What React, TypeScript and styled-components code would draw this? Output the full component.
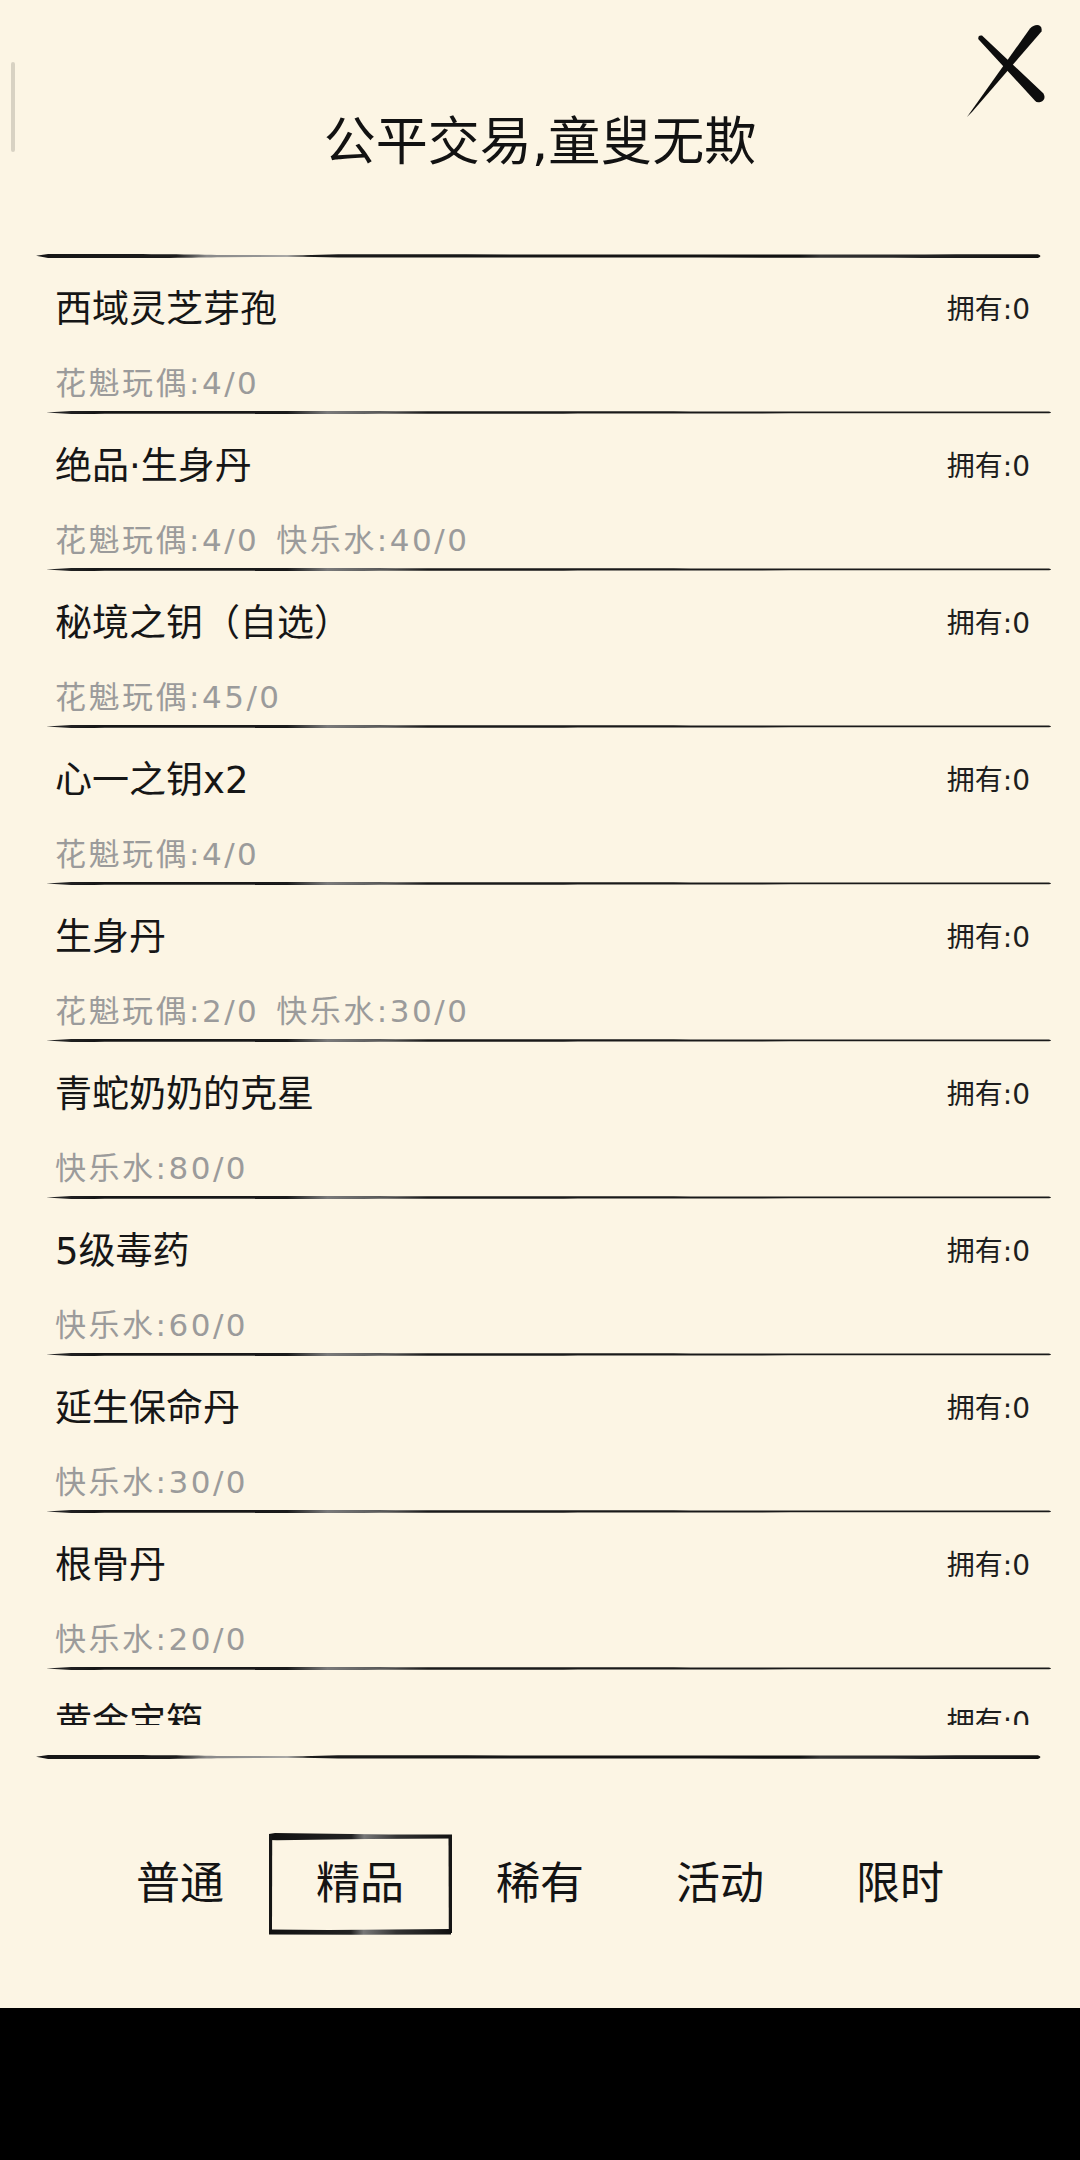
import { useId } from 'react';
import styled, { createGlobalStyle } from 'styled-components';

type Item = {
  name: string;
  costs: string[];
};

const items: Item[] = [
  { name: '西域灵芝芽孢', costs: ['花魁玩偶:4/0'] },
  { name: '绝品·生身丹', costs: ['花魁玩偶:4/0', '快乐水:40/0'] },
  { name: '秘境之钥（自选）', costs: ['花魁玩偶:45/0'] },
  { name: '心一之钥x2', costs: ['花魁玩偶:4/0'] },
  { name: '生身丹', costs: ['花魁玩偶:2/0', '快乐水:30/0'] },
  { name: '青蛇奶奶的克星', costs: ['快乐水:80/0'] },
  { name: '5级毒药', costs: ['快乐水:60/0'] },
  { name: '延生保命丹', costs: ['快乐水:30/0'] },
  { name: '根骨丹', costs: ['快乐水:20/0'] },
  { name: '黄金宝箱', costs: ['快乐水:100/0'] },
];

const tabs = ['普通', '精品', '稀有', '活动', '限时'];
const activeTab = '精品';

const GlobalStyle = createGlobalStyle`
  html, body {
    margin: 0;
    padding: 0;
    background: #000;
  }
  body {
    font-family: "DejaVu Sans", "Noto Sans CJK SC", sans-serif;
    -webkit-font-smoothing: antialiased;
  }
`;

// thick ink stroke used above and below the list
const BrushLine = ({ className }: { className?: string }) => {
  const id = useId();
  return (
    <svg className={className} viewBox="0 0 1000 8" preserveAspectRatio="none">
      <defs>
        <linearGradient id={id} x1="0" x2="1" y1="0" y2="0">
          <stop offset="0" stopColor="#151515" />
          <stop offset="0.14" stopColor="#1c1c1c" />
          <stop offset="0.17" stopColor="#8a8a8a" />
          <stop offset="0.25" stopColor="#9a9a9a" />
          <stop offset="0.27" stopColor="#1a1a1a" />
          <stop offset="0.76" stopColor="#111" />
          <stop offset="0.78" stopColor="#333" />
          <stop offset="1" stopColor="#111" />
        </linearGradient>
      </defs>
      <path
        d="M0,3.8 L12,1.4 C80,1 150,1.5 185,2.6 L265,3.1 L300,1.8 C520,2 780,2.2 995,1.6 Q1000,4 995,6.6 C780,6.2 520,6 300,6 L265,5 L185,5.6 C150,6.6 80,6.9 12,6.6 Z"
        fill={`url(#${id})`}
      />
    </svg>
  );
};

// thinner stroke between rows
const RowStroke = ({ className }: { className?: string }) => {
  const id = useId();
  return (
    <svg className={className} viewBox="0 0 1000 6" preserveAspectRatio="none">
      <defs>
        <linearGradient id={id} x1="0" x2="1" y1="0" y2="0">
          <stop offset="0" stopColor="#2a2a2a" />
          <stop offset="0.05" stopColor="#161616" />
          <stop offset="0.24" stopColor="#1a1a1a" />
          <stop offset="0.28" stopColor="#7a7a7a" />
          <stop offset="0.34" stopColor="#555" />
          <stop offset="0.38" stopColor="#1a1a1a" />
          <stop offset="1" stopColor="#1a1a1a" />
        </linearGradient>
      </defs>
      <path
        d="M0,3 L25,1.2 C200,1 300,1.6 996,1.9 Q1000,3 996,4 C300,4.3 200,4.8 25,4.8 Z"
        fill={`url(#${id})`}
      />
    </svg>
  );
};

const CloseIcon = () => (
  <svg width="90" height="100" viewBox="960 20 90 100">
    <path
      d="M978.4,39.2 Q977.5,34.8 982,35.6 L1043.5,93.5 Q1046.5,100 1040.5,102 Q1036.8,103 1035,100.8 Z"
      fill="#0d0d0d"
    />
    <path
      d="M1030,28.5 C1034.5,23.5 1043,23.5 1041.5,31.5 L972,112 L967,117 L1025,35.5 Z"
      fill="#0d0d0d"
    />
  </svg>
);

const TabFrame = () => {
  const id = useId();
  return (
    <FrameSvg viewBox="0 0 183 102" preserveAspectRatio="none">
      <defs>
        <linearGradient id={id} x1="0" x2="1" y1="0" y2="0">
          <stop offset="0" stopColor="#111" />
          <stop offset="0.45" stopColor="#222" />
          <stop offset="0.52" stopColor="#777" />
          <stop offset="0.7" stopColor="#333" />
          <stop offset="1" stopColor="#111" />
        </linearGradient>
      </defs>
      <path d="M0,1 L6,0 L120,1.6 L183,1.4 L183,5.6 L100,6 L8,7.2 L0,7 Z" fill={`url(#${id})`} />
      <path d="M0,2 L3.2,2 L3,100 L0,100 Z" fill="#151515" />
      <path d="M179.5,2 L183,2 L183,100 L179.8,100 Z" fill="#151515" />
      <path d="M0,96.5 L60,97 L120,96.6 L182,96 L182,101.6 L90,101.8 L0,101.4 Z" fill={`url(#${id})`} />
    </FrameSvg>
  );
};

export default function App() {
  return (
    <>
      <GlobalStyle />
      <Screen>
        <ScrollThumb />
        <CloseButton aria-label="close">
          <CloseIcon />
        </CloseButton>

        <Header>
          <Title>公平交易,童叟无欺</Title>
        </Header>

        <TopLine />

        <ListViewport>
          {items.map((item) => (
            <Row key={item.name}>
              <NameLine>
                <ItemName>{item.name}</ItemName>
                <Owned>拥有:0</Owned>
              </NameLine>
              <CostLine>
                {item.costs.map((c) => (
                  <Cost key={c}>{c}</Cost>
                ))}
              </CostLine>
              <Separator />
            </Row>
          ))}
        </ListViewport>

        <BottomLine />

        <TabRow>
          {tabs.map((t) => (
            <Tab key={t}>
              {t === activeTab && <TabFrame />}
              <TabLabel>{t}</TabLabel>
            </Tab>
          ))}
        </TabRow>
      </Screen>
      <NavBar />
    </>
  );
}

const Screen = styled.div`
  position: relative;
  width: 1080px;
  height: 2008px;
  background: #fcf5e4;
  display: flex;
  flex-direction: column;
  overflow: hidden;
`;

const ScrollThumb = styled.div`
  position: absolute;
  left: 11px;
  top: 62px;
  width: 4px;
  height: 90px;
  border-radius: 2px;
  background: rgba(0, 0, 0, 0.14);
`;

const CloseButton = styled.button`
  position: absolute;
  top: 20px;
  right: 30px;
  width: 90px;
  height: 100px;
  padding: 0;
  border: none;
  background: none;

  svg {
    display: block;
  }
`;

const Header = styled.div`
  height: 253px;
  box-sizing: border-box;
  padding-top: 112px;
  text-align: center;
`;

const Title = styled.h1`
  margin: 0;
  font-size: 52px;
  line-height: 60px;
  font-weight: 400;
  color: #121212;
`;

const TopLine = styled(BrushLine)`
  display: block;
  flex: none;
  width: 1007px;
  height: 6px;
  margin-left: 36px;
`;

const BottomLine = styled(BrushLine)`
  display: block;
  flex: none;
  width: 1007px;
  height: 6px;
  margin-left: 36px;
  margin-top: 29px;
`;

const ListViewport = styled.div`
  height: 1466px;
  flex: none;
  overflow: hidden;
`;

const Row = styled.div`
  height: 157px;
  box-sizing: border-box;
  padding-top: 29px;
  display: flex;
  flex-direction: column;
`;

const NameLine = styled.div`
  display: flex;
  align-items: center;
  justify-content: space-between;
  padding: 0 50px 0 55px;
  height: 44px;
`;

const ItemName = styled.span`
  font-size: 37px;
  line-height: 44px;
  color: #161616;
`;

const Owned = styled.span`
  font-size: 28px;
  line-height: 44px;
  color: #1e1e1e;
`;

const CostLine = styled.div`
  display: flex;
  gap: 17px;
  margin-top: 31px;
  padding-left: 55px;
  height: 40px;
`;

const Cost = styled.span`
  font-size: 31px;
  line-height: 40px;
  letter-spacing: 2.5px;
  color: #9b9b9b;
`;

const Separator = styled(RowStroke)`
  display: block;
  width: 1007px;
  height: 5px;
  margin-left: 46px;
  margin-top: auto;
  margin-bottom: 1px;
`;

const TabRow = styled.div`
  display: flex;
  justify-content: center;
  margin-top: 73px;
`;

const Tab = styled.div`
  position: relative;
  width: 180px;
  height: 102px;
  display: flex;
  align-items: center;
  justify-content: center;
`;

const FrameSvg = styled.svg`
  position: absolute;
  top: 0;
  left: -1px;
  width: 183px;
  height: 102px;
`;

const TabLabel = styled.span`
  position: relative;
  font-size: 44px;
  line-height: 102px;
  color: #141414;
`;

const NavBar = styled.div`
  height: 152px;
  background: #000;
`;
